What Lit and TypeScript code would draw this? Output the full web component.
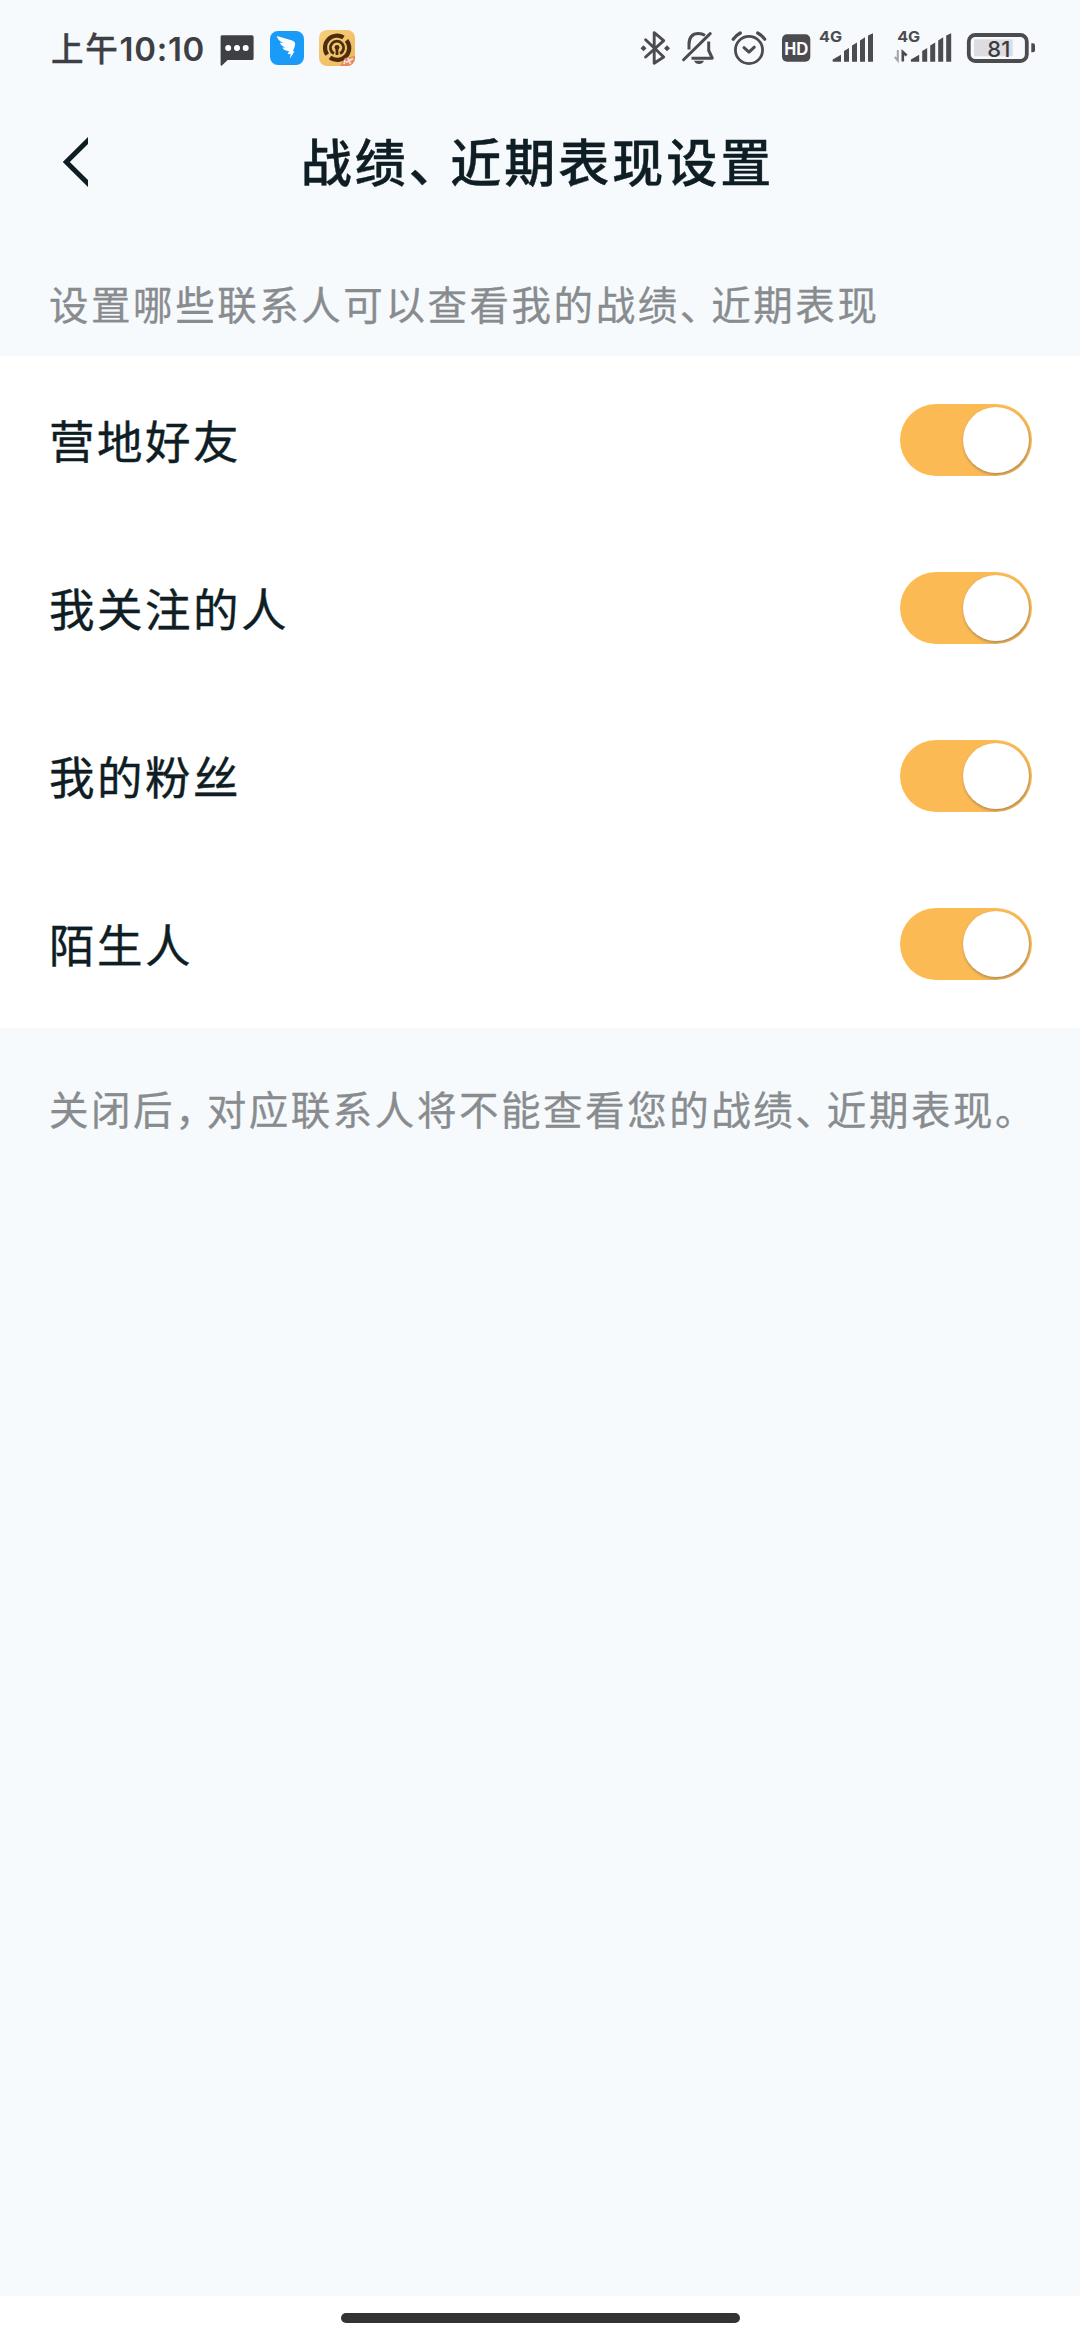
import { LitElement, html, css, svg } from "lit";
import { customElement, property, state } from "lit/decorators.js";

const INK = "#4b4b50";

// One slice of the status bar; slices tile side by side and share one coordinate space.
const slice = (x0: number, x1: number, content: unknown) => html`
  <svg width=${x1 - x0} height="96" viewBox="${x0} 0 ${x1 - x0} 96" fill="none">${content}</svg>
`;

const signalBars = (dx: number) => svg`
  <g fill=${INK} transform="translate(${dx} 0)">
    <path d="M832.7 61.8v-2.3l8.3-4.8v7.1z"/>
    <path d="M844 61.8V51l5-3v13.8z"/>
    <path d="M852 61.8V45.6l5-3v19.2z"/>
    <path d="M860 61.8V40.4l5-3.2v24.6z"/>
    <path d="M868 61.8V35.4l5-2.2v28.6z"/>
    <text class="net" x="819" y="42.4" textLength="23" lengthAdjust="spacingAndGlyphs">4G</text>
  </g>
`;

@customElement("status-bar")
class StatusBar extends LitElement {
  static styles = css`
    :host { display: flex; height: 96px; padding: 0 32px 0 51px; justify-content: space-between; }
    .group { display: flex; }
    .time { width: 161px; height: 96px; color: #3e3f44; white-space: nowrap; font: 600 33px/95px "Inter", "Noto Sans CJK SC", sans-serif; }
    .cn { font: 500 32.5px/94px "Noto Sans CJK SC", sans-serif; letter-spacing: 1.8px; -webkit-text-stroke: 0.4px #3e3f44; }
    .digits { letter-spacing: 0.7px; }
    svg { display: block; }
    .hd { font: 700 18px "Liberation Sans", sans-serif; fill: #fff; }
    .net { font: 700 15px "Inter", sans-serif; }
    .level { font: 500 21.5px "Inter", sans-serif; fill: #3c3c40; }
  `;
  render() {
    return html`
      <div class="group">
        <div class="time"><span class="cn">上午</span><span class="digits">10:10</span></div>
        ${slice(212, 262, svg`
          <path fill="#3f4045" d="M222 35.3h30a1.6 1.6 0 0 1 1.6 1.6v21.600a1.600 1.600 0 0 1-1.600 1.600h-24.300l-5.800 5.300q-1.300.8-1.300-.8V37a1.600 1.600 0 0 1 1.400-1.700z"/>
          <g fill="#fff"><circle cx="228.200" cy="48" r="3"/><circle cx="237" cy="48" r="3"/><circle cx="245.700" cy="48" r="3"/></g>`)}
        ${slice(262, 312, svg`
          <rect x="270" y="31" width="34" height="34" rx="8" fill="#1b9bf8"/>
          <path fill="#fff" d="M276.800 36l15.400 4.600q3.400 1.200 2.900 4.200-.6 3.500-2.300 6.500l1.700.2-4.700 7.300.9-4.600-3-.1 1.300-3q-5.300-.3-6.500-3.600l3.300.1q-4.800-1.400-5.900-5l4 .7q-6.200-2.600-7.100-7.300z"/>`)}
        ${slice(312, 362, svg`
          <defs>
            <linearGradient id="gold" x1="0" y1="0" x2="1" y2="1">
              <stop offset="0" stop-color="#f6cf7c"/><stop offset="1" stop-color="#efb85a"/>
            </linearGradient>
            <clipPath id="tile"><rect x="319" y="30" width="36" height="36" rx="8"/></clipPath>
          </defs>
          <g clip-path="url(#tile)">
            <rect x="319" y="30" width="36" height="36" fill="url(#gold)"/>
            <g stroke="#4a2c10">
              <path stroke-width="4.200" d="M343.500 37.600A12 12 0 0 0 327.200 54.600M330 57.500A12 12 0 0 0 346.500 40.300"/>
              <path stroke-width="2.800" d="M334 53.600A6.600 6.600 0 1 1 340 53.600M337 47v8"/>
            </g>
            <circle cx="337" cy="47.300" r="2.400" fill="#4a2c10"/>
            <path d="M340 66l5-8 10-2v10z" fill="#e58a62"/>
            <path d="M346 62.500l7-4M348 58l2.500 6M345 60l-1 4" stroke="#fbe6d8" stroke-width="1.600"/>
          </g>`)}
      </div>
      <div class="group">
        ${slice(636, 676, svg`
          <path d="M645.600 39.700L663.700 57 654.200 63.300V32.700L663.700 40.600 645.600 57" stroke=${INK} stroke-width="2.900" stroke-linejoin="round" stroke-linecap="round"/>
          <path fill=${INK} d="M643.500 45.300l3 3-3 3-3-3zM667 45.300l3 3-3 3-3-3z"/>`)}
        ${slice(676, 722, svg`
          <g stroke=${INK} stroke-width="3" stroke-linecap="round" stroke-linejoin="round">
            <path d="M683.600 59.800L710.200 33.600"/>
            <path d="M689 49.500V44.500Q689 33.400 698.500 33.400 702.200 33.400 705 35.400" stroke-linecap="butt"/>
            <path d="M708.700 41.500V50.500L712.300 58.200H691.500" stroke-linecap="butt"/>
          </g>
          <path fill=${INK} d="M694 60.800h10q-1.500 3.300-5 3.300t-5-3.300z"/>`)}
        ${slice(722, 774, svg`
          <g stroke=${INK} stroke-linecap="round" stroke-linejoin="round">
            <circle cx="749" cy="50" r="13.600" stroke-width="2.800"/>
            <path d="M744 47.700L749 52.200 754.300 47.200" stroke-width="3"/>
            <path d="M733.200 39.200Q736 35.300 740.300 33M757.700 33Q762 35.300 764.700 39.200" stroke-width="3.200"/>
          </g>`)}
        ${slice(774, 815, svg`
          <rect x="782" y="34.200" width="28.300" height="27.600" rx="5" fill=${INK}/>
          <text class="hd" x="784.300" y="55.200" textLength="24" lengthAdjust="spacingAndGlyphs">HD</text>`)}
        ${slice(815, 885, signalBars(0))}
        ${slice(885, 960, svg`
          ${signalBars(78.200)}
          <path d="M897.800 50V60.500L894.800 57" stroke="#a2a3a8" stroke-width="2"/>
          <path d="M902.800 61.500V52L906.600 55.500" stroke=${INK} stroke-width="2.600"/>`)}
        ${slice(960, 1048, svg`
          <rect x="974" y="39.300" width="38.700" height="17" fill="#dddde1"/>
          <rect x="968.800" y="35" width="58" height="26" rx="6.500" stroke=${INK} stroke-width="3.800"/>
          <path d="M1031.300 43.300h1.700a2 2 0 0 1 2 2v5a2 2 0 0 1-2 2h-1.700z" fill=${INK}/>
          <text class="level" x="987.300" y="56.500" textLength="23" lengthAdjust="spacingAndGlyphs">81</text>`)}
      </div>
    `;
  }
}

@customElement("toggle-switch")
class ToggleSwitch extends LitElement {
  @property({ type: Boolean, reflect: true }) on = false;
  static styles = css`
    :host { display: block; }
    .track { display: flex; box-sizing: border-box; width: 132px; height: 72px; padding: 3px; border-radius: 36px; background: #d9dcdf; overflow: hidden; cursor: pointer; }
    :host([on]) .track { justify-content: flex-end; background: #fcba55; }
    .knob { width: 66px; height: 66px; border-radius: 50%; background: #fff; box-shadow: 0.5px 1.5px 3px rgba(110, 95, 75, 0.6); }
  `;
  render() {
    return html`<div class="track" role="switch" aria-checked=${this.on}><div class="knob"></div></div>`;
  }
}

@customElement("app-root")
class AppRoot extends LitElement {
  @state() private rows = [
    { label: "营地好友", on: true },
    { label: "我关注的人", on: true },
    { label: "我的粉丝", on: true },
    { label: "陌生人", on: true },
  ];

  static styles = css`
    :host { display: flex; flex-direction: column; width: 1080px; height: 2340px; background: #f6fafd; color: #0f1e24; font-family: "Noto Sans CJK SC", sans-serif; overflow: hidden; }
    .header { display: grid; grid-template-columns: 1fr auto 1fr; align-items: center; height: 132px; }
    .back { display: block; margin-left: 60px; }
    .title { margin: 0; font-size: 51px; line-height: 129px; font-weight: 500; letter-spacing: 3px; white-space: nowrap; padding: 0 5px 3px 0; -webkit-text-stroke: 0.4px #0f1e24; }
    .title .mark { letter-spacing: -9.500px; }
    .note { color: #898c8f; font-size: 39.500px; letter-spacing: 2.550px; white-space: nowrap; line-height: 60px; padding-left: 49px; -webkit-text-stroke: 0.3px #898c8f; }
    .note .mark { letter-spacing: -8px; }
    .intro { height: 83px; padding-top: 45px; }
    .list { background: #fff; }
    .row { display: flex; align-items: center; justify-content: space-between; height: 168px; padding: 0 48px 0 49px; }
    .label { font-size: 45.500px; letter-spacing: 2.500px; line-height: 66px; padding-bottom: 3px; -webkit-text-stroke: 0.4px #0f1e24; }
    .outro { padding-top: 50px; }
    .nav { display: flex; justify-content: center; height: 27px; margin-top: auto; padding-top: 17px; background: #fff; }
    .pill { width: 399px; height: 10px; border-radius: 5px; background: #333; }
  `;

  private toggle(i: number) {
    this.rows = this.rows.map((r, j) => (j === i ? { ...r, on: !r.on } : r));
  }

  render() {
    return html`
      <status-bar></status-bar>
      <div class="header">
        <svg class="back" width="28" height="60" viewBox="60 132 28 60" fill="none">
          <path d="M92 136.500L66.300 162 92 187.500" stroke="#0f1e24" stroke-width="5"/>
        </svg>
        <h1 class="title">战绩<span class="mark">、</span>近期表现设置</h1>
        <span></span>
      </div>
      <div class="note intro">设置哪些联系人可以查看我的战绩<span class="mark">、</span>近期表现</div>
      <div class="list">
        ${this.rows.map((r, i) => html`
          <div class="row">
            <span class="label">${r.label}</span>
            <toggle-switch ?on=${r.on} @click=${() => this.toggle(i)}></toggle-switch>
          </div>`)}
      </div>
      <div class="note outro">关闭后<span class="mark">，</span>对应联系人将不能查看您的战绩<span class="mark">、</span>近期表现。</div>
      <div class="nav"><div class="pill"></div></div>
    `;
  }
}
